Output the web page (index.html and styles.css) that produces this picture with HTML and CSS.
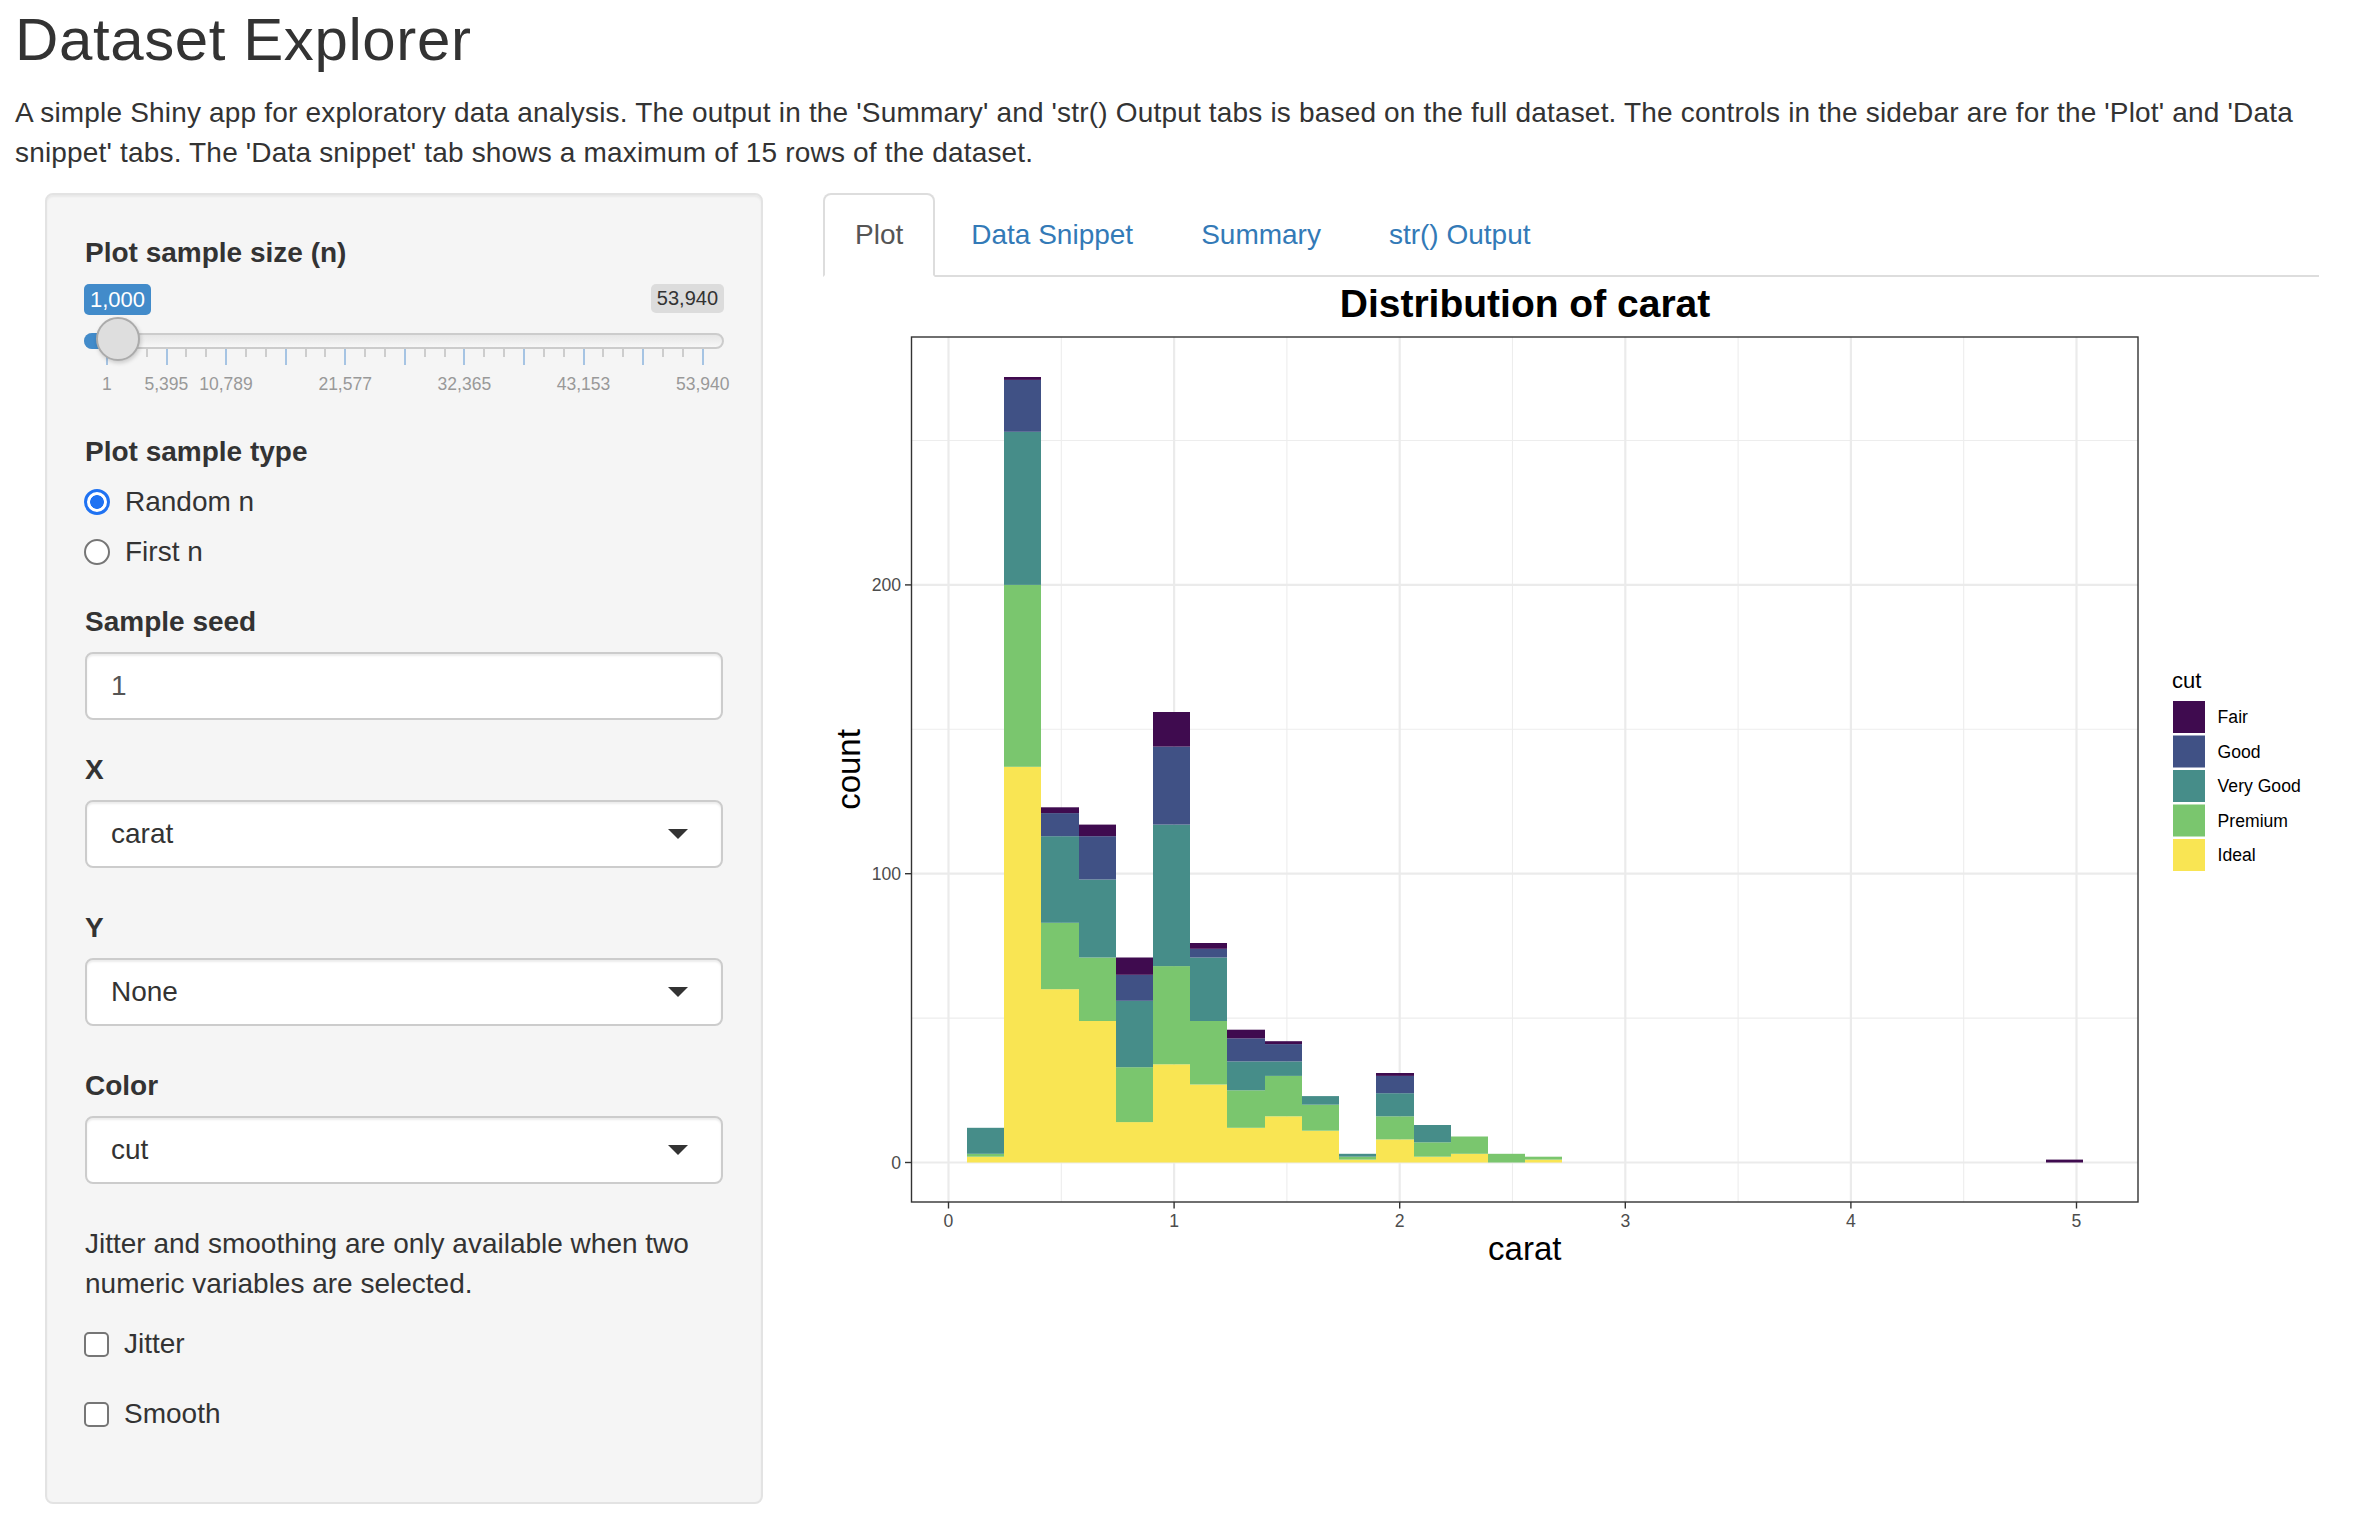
FILE: index.html
```html
<!DOCTYPE html>
<html lang="en">
<head>
<meta charset="utf-8">
<title>Dataset Explorer</title>
<link rel="stylesheet" href="styles.css">
</head>
<body>
<div class="page">
  <h2 class="title">Dataset Explorer</h2>
  <p class="intro">A simple Shiny app for exploratory data analysis. The output in the 'Summary' and 'str() Output tabs is based on the full dataset. The controls in the sidebar are for the 'Plot' and 'Data snippet' tabs. The 'Data snippet' tab shows a maximum of 15 rows of the dataset.</p>
  <div class="row">
    <div class="col-side">
      <form class="well">
        <div class="form-group">
          <label class="control-label">Plot sample size (n)</label>
          <div class="irs">
            <div class="irs-badges">
              <span class="irs-from">1,000</span>
              <span class="irs-max">53,940</span>
            </div>
            <div class="irs-track">
              <span class="irs-bar" style="width:34px"></span>
              <span class="irs-handle" style="left:10px"></span>
            </div>
            <div class="irs-grid">
              <span class="tick"></span><span class="tick small"></span><span class="tick small"></span>
              <span class="tick"></span><span class="tick small"></span><span class="tick small"></span>
              <span class="tick"></span><span class="tick small"></span><span class="tick small"></span>
              <span class="tick"></span><span class="tick small"></span><span class="tick small"></span>
              <span class="tick"></span><span class="tick small"></span><span class="tick small"></span>
              <span class="tick"></span><span class="tick small"></span><span class="tick small"></span>
              <span class="tick"></span><span class="tick small"></span><span class="tick small"></span>
              <span class="tick"></span><span class="tick small"></span><span class="tick small"></span>
              <span class="tick"></span><span class="tick small"></span><span class="tick small"></span>
              <span class="tick"></span><span class="tick small"></span><span class="tick small"></span>
              <span class="tick"></span>
            </div>
            <div class="irs-labels">
              <span>1</span><span>5,395</span><span>10,789</span><span></span><span>21,577</span><span></span><span>32,365</span><span></span><span>43,153</span><span></span><span>53,940</span>
            </div>
          </div>
        </div>

        <div class="form-group">
          <label class="control-label">Plot sample type</label>
          <div class="options">
            <div class="option"><span class="radio-mark checked"></span><span>Random n</span></div>
            <div class="option"><span class="radio-mark"></span><span>First n</span></div>
          </div>
        </div>

        <div class="form-group">
          <label class="control-label">Sample seed</label>
          <input class="form-control" type="text" value="1">
        </div>

        <div class="form-group select-group">
          <label class="control-label">X</label>
          <div class="select-box"><span>carat</span><span class="caret"></span></div>
        </div>

        <div class="form-group select-group">
          <label class="control-label">Y</label>
          <div class="select-box"><span>None</span><span class="caret"></span></div>
        </div>

        <div class="form-group select-group">
          <label class="control-label">Color</label>
          <div class="select-box"><span>cut</span><span class="caret"></span></div>
        </div>

        <p class="help">Jitter and smoothing are only available when two numeric variables are selected.</p>

        <div class="form-group">
          <div class="option"><span class="check-mark"></span><span>Jitter</span></div>
        </div>
        <div class="form-group">
          <div class="option"><span class="check-mark"></span><span>Smooth</span></div>
        </div>
      </form>
    </div>

    <div class="col-main">
      <ul class="nav-tabs">
        <li class="active"><a href="#plot">Plot</a></li>
        <li><a href="#snippet">Data Snippet</a></li>
        <li><a href="#summary">Summary</a></li>
        <li><a href="#str">str() Output</a></li>
      </ul>
      <div class="tab-content">
        <svg class="plot" viewBox="0 0 1496 1000" xmlns="http://www.w3.org/2000/svg">
          <text class="p-title" x="702" y="40" text-anchor="middle">Distribution of carat</text>

          <g class="grid-minor">
            <line x1="238.3" y1="60" x2="238.3" y2="925"/>
            <line x1="463.9" y1="60" x2="463.9" y2="925"/>
            <line x1="689.5" y1="60" x2="689.5" y2="925"/>
            <line x1="915.1" y1="60" x2="915.1" y2="925"/>
            <line x1="1140.7" y1="60" x2="1140.7" y2="925"/>
            <line x1="88.5" y1="741.1" x2="1315" y2="741.1"/>
            <line x1="88.5" y1="452.3" x2="1315" y2="452.3"/>
            <line x1="88.5" y1="163.5" x2="1315" y2="163.5"/>
          </g>
          <g class="grid-major">
            <line x1="125.5" y1="60" x2="125.5" y2="925"/>
            <line x1="351.1" y1="60" x2="351.1" y2="925"/>
            <line x1="576.7" y1="60" x2="576.7" y2="925"/>
            <line x1="802.3" y1="60" x2="802.3" y2="925"/>
            <line x1="1027.9" y1="60" x2="1027.9" y2="925"/>
            <line x1="1253.5" y1="60" x2="1253.5" y2="925"/>
            <line x1="88.5" y1="885.5" x2="1315" y2="885.5"/>
            <line x1="88.5" y1="596.7" x2="1315" y2="596.7"/>
            <line x1="88.5" y1="307.9" x2="1315" y2="307.9"/>
          </g>

          <g class="bars">
            <rect x="144" y="879.7" width="37" height="5.8" fill="#f9e553"/>
            <rect x="144" y="876.8" width="37" height="2.9" fill="#7ac66e"/>
            <rect x="144" y="850.8" width="37" height="26" fill="#468d89"/>

            <rect x="181" y="489.8" width="37" height="395.7" fill="#f9e553"/>
            <rect x="181" y="307.9" width="37" height="181.9" fill="#7ac66e"/>
            <rect x="181" y="154.8" width="37" height="153.1" fill="#468d89"/>
            <rect x="181" y="102.9" width="37" height="51.9" fill="#405185"/>
            <rect x="181" y="100" width="37" height="2.9" fill="#3f0b4f"/>

            <rect x="218" y="712.2" width="38" height="173.3" fill="#f9e553"/>
            <rect x="218" y="645.8" width="38" height="66.4" fill="#7ac66e"/>
            <rect x="218" y="559.2" width="38" height="86.6" fill="#468d89"/>
            <rect x="218" y="536.1" width="38" height="23.1" fill="#405185"/>
            <rect x="218" y="530.3" width="38" height="5.8" fill="#3f0b4f"/>

            <rect x="256" y="744" width="37" height="141.5" fill="#f9e553"/>
            <rect x="256" y="680.5" width="37" height="63.5" fill="#7ac66e"/>
            <rect x="256" y="602.5" width="37" height="78" fill="#468d89"/>
            <rect x="256" y="559.2" width="37" height="43.3" fill="#405185"/>
            <rect x="256" y="547.6" width="37" height="11.6" fill="#3f0b4f"/>

            <rect x="293" y="845.1" width="37" height="40.4" fill="#f9e553"/>
            <rect x="293" y="790.2" width="37" height="54.9" fill="#7ac66e"/>
            <rect x="293" y="723.8" width="37" height="66.4" fill="#468d89"/>
            <rect x="293" y="697.8" width="37" height="26" fill="#405185"/>
            <rect x="293" y="680.5" width="37" height="17.3" fill="#3f0b4f"/>

            <rect x="330" y="787.3" width="37" height="98.2" fill="#f9e553"/>
            <rect x="330" y="689.1" width="37" height="98.2" fill="#7ac66e"/>
            <rect x="330" y="547.6" width="37" height="141.5" fill="#468d89"/>
            <rect x="330" y="469.6" width="37" height="78" fill="#405185"/>
            <rect x="330" y="435" width="37" height="34.6" fill="#3f0b4f"/>

            <rect x="367" y="807.5" width="37" height="78" fill="#f9e553"/>
            <rect x="367" y="744" width="37" height="63.5" fill="#7ac66e"/>
            <rect x="367" y="680.5" width="37" height="63.5" fill="#468d89"/>
            <rect x="367" y="671.8" width="37" height="8.7" fill="#405185"/>
            <rect x="367" y="666" width="37" height="5.8" fill="#3f0b4f"/>

            <rect x="404" y="850.8" width="38" height="34.7" fill="#f9e553"/>
            <rect x="404" y="813.3" width="38" height="37.5" fill="#7ac66e"/>
            <rect x="404" y="784.4" width="38" height="28.9" fill="#468d89"/>
            <rect x="404" y="761.3" width="38" height="23.1" fill="#405185"/>
            <rect x="404" y="752.7" width="38" height="8.6" fill="#3f0b4f"/>

            <rect x="442" y="839.3" width="37" height="46.2" fill="#f9e553"/>
            <rect x="442" y="798.9" width="37" height="40.4" fill="#7ac66e"/>
            <rect x="442" y="784.4" width="37" height="14.5" fill="#468d89"/>
            <rect x="442" y="767.1" width="37" height="17.3" fill="#405185"/>
            <rect x="442" y="764.2" width="37" height="2.9" fill="#3f0b4f"/>

            <rect x="479" y="853.7" width="37" height="31.8" fill="#f9e553"/>
            <rect x="479" y="827.7" width="37" height="26" fill="#7ac66e"/>
            <rect x="479" y="819.1" width="37" height="8.6" fill="#468d89"/>

            <rect x="516" y="882.6" width="37" height="2.9" fill="#f9e553"/>
            <rect x="516" y="879.7" width="37" height="2.9" fill="#7ac66e"/>
            <rect x="516" y="876.8" width="37" height="2.9" fill="#468d89"/>

            <rect x="553" y="862.4" width="38" height="23.1" fill="#f9e553"/>
            <rect x="553" y="839.3" width="38" height="23.1" fill="#7ac66e"/>
            <rect x="553" y="816.2" width="38" height="23.1" fill="#468d89"/>
            <rect x="553" y="798.9" width="38" height="17.3" fill="#405185"/>
            <rect x="553" y="796" width="38" height="2.9" fill="#3f0b4f"/>

            <rect x="591" y="879.7" width="37" height="5.8" fill="#f9e553"/>
            <rect x="591" y="865.3" width="37" height="14.4" fill="#7ac66e"/>
            <rect x="591" y="848" width="37" height="17.3" fill="#468d89"/>

            <rect x="628" y="876.8" width="37" height="8.7" fill="#f9e553"/>
            <rect x="628" y="859.5" width="37" height="17.3" fill="#7ac66e"/>

            <rect x="665" y="876.8" width="37" height="8.7" fill="#7ac66e"/>

            <rect x="702" y="882.6" width="37" height="2.9" fill="#f9e553"/>
            <rect x="702" y="879.7" width="37" height="2.9" fill="#7ac66e"/>

            <rect x="1223" y="882.6" width="37" height="2.9" fill="#3f0b4f"/>
          </g>

          <rect class="panel-border" x="88.5" y="60" width="1226.5" height="865"/>

          <g class="axis-ticks">
            <line x1="82" y1="885.5" x2="88.5" y2="885.5"/>
            <line x1="82" y1="596.7" x2="88.5" y2="596.7"/>
            <line x1="82" y1="307.9" x2="88.5" y2="307.9"/>
            <line x1="125.5" y1="925" x2="125.5" y2="931.5"/>
            <line x1="351.1" y1="925" x2="351.1" y2="931.5"/>
            <line x1="576.7" y1="925" x2="576.7" y2="931.5"/>
            <line x1="802.3" y1="925" x2="802.3" y2="931.5"/>
            <line x1="1027.9" y1="925" x2="1027.9" y2="931.5"/>
            <line x1="1253.5" y1="925" x2="1253.5" y2="931.5"/>
          </g>

          <g class="tick-label">
            <text x="78" y="891.8" text-anchor="end">0</text>
            <text x="78" y="603" text-anchor="end">100</text>
            <text x="78" y="314.2" text-anchor="end">200</text>
            <text x="125.5" y="950.3" text-anchor="middle">0</text>
            <text x="351.1" y="950.3" text-anchor="middle">1</text>
            <text x="576.7" y="950.3" text-anchor="middle">2</text>
            <text x="802.3" y="950.3" text-anchor="middle">3</text>
            <text x="1027.9" y="950.3" text-anchor="middle">4</text>
            <text x="1253.5" y="950.3" text-anchor="middle">5</text>
          </g>

          <text class="axis-title" x="701.75" y="983.3" text-anchor="middle">carat</text>
          <text class="axis-title" text-anchor="middle" transform="translate(37 492.5) rotate(-90)">count</text>

          <g class="legend">
            <text class="legend-title" x="1349" y="410.5">cut</text>
            <rect x="1350" y="424" width="32" height="32" fill="#3f0b4f"/>
            <rect x="1350" y="458.5" width="32" height="32" fill="#405185"/>
            <rect x="1350" y="493" width="32" height="32" fill="#468d89"/>
            <rect x="1350" y="527.5" width="32" height="32" fill="#7ac66e"/>
            <rect x="1350" y="562" width="32" height="32" fill="#f9e553"/>
            <text class="legend-label" x="1394.6" y="446.3">Fair</text>
            <text class="legend-label" x="1394.6" y="480.8">Good</text>
            <text class="legend-label" x="1394.6" y="515.3">Very Good</text>
            <text class="legend-label" x="1394.6" y="549.8">Premium</text>
            <text class="legend-label" x="1394.6" y="584.3">Ideal</text>
          </g>
        </svg>
      </div>
    </div>
  </div>
</div>
</body>
</html>
```

FILE: styles.css
```css
* { box-sizing: border-box; }

html, body {
  margin: 0;
  padding: 0;
  background: #ffffff;
}

body {
  font-family: "Liberation Sans", Arial, Helvetica, sans-serif;
  font-size: 28px;
  line-height: 40px;
  color: #333333;
}

.page {
  padding: 0 9px 0 15px;
}

.title {
  font-size: 60px;
  line-height: 66px;
  font-weight: normal;
  letter-spacing: 0.6px;
  margin: 7px 0 20px;
  color: #333333;
}

.intro {
  margin: 0 0 20px;
  letter-spacing: 0.18px;
}

.row {
  display: flex;
  align-items: flex-start;
}

.col-side {
  flex: 0 0 778px;
  width: 778px;
  min-width: 0;
  padding: 0 30px;
}

.col-main {
  flex: 1 1 auto;
  min-width: 0;
  padding: 0 30px;
}

/* ---------- sidebar well ---------- */
.well {
  margin: 0;
  background: #f5f5f5;
  border: 2px solid #e3e3e3;
  border-radius: 8px;
  padding: 38px;
  box-shadow: inset 0 2px 2px rgba(0, 0, 0, 0.05);
}

.form-group {
  margin-bottom: 30px;
}

.select-group {
  margin-bottom: 40px;
}

.control-label {
  display: block;
  font-weight: bold;
  margin-bottom: 10px;
}

/* ---------- range slider ---------- */
.irs {
  height: 119px;
  min-width: 0;
}

.irs-badges {
  display: flex;
  justify-content: space-between;
  align-items: flex-start;
  height: 32px;
  padding-top: 1px;
}

.irs-from {
  margin-left: -1px;
  background: #428bca;
  color: #ffffff;
  font-size: 22px;
  line-height: 31px;
  padding: 0 6px;
  border-radius: 5px;
}

.irs-max {
  background: rgba(0, 0, 0, 0.1);
  color: #333333;
  font-size: 20px;
  line-height: 29px;
  padding: 0 6px;
  border-radius: 5px;
  margin-right: -1px;
}

.irs-track {
  position: relative;
  margin: 18px -1px 0 -1px;
  height: 16px;
  border: 2px solid #cccccc;
  border-radius: 8px;
  background: linear-gradient(to bottom, #dedede -50%, #ffffff 150%);
}

.irs-bar {
  position: absolute;
  left: -2px;
  top: -2px;
  height: 16px;
  background: #428bca;
  border-radius: 8px 0 0 8px;
}

.irs-handle {
  position: absolute;
  top: -18px;
  width: 44px;
  height: 44px;
  border: 2px solid #ababab;
  border-radius: 50%;
  background: #dedede;
  box-shadow: 1px 2px 4px rgba(0, 0, 0, 0.18);
  z-index: 2;
}

.irs-grid {
  display: flex;
  justify-content: space-between;
  align-items: flex-start;
  margin-left: 21px;
  width: 598px;
  height: 16px;
}

.tick {
  width: 2px;
  height: 16px;
  background: #a6c4e3;
}

.tick.small {
  height: 8px;
  background: #cdcdcd;
}

.irs-labels {
  display: flex;
  width: 638px;
  margin-top: 9px;
  margin-left: -8px;
  white-space: nowrap;
  overflow: visible;
}

.irs-labels span {
  flex: 0 0 59.6px;
  text-align: center;
  font-size: 17.5px;
  line-height: 20px;
  color: #999999;
}

/* ---------- radio / checkbox ---------- */
.option {
  display: flex;
  align-items: center;
  height: 40px;
  margin-bottom: 10px;
}

.option:last-child {
  margin-bottom: 0;
}

.radio-mark {
  flex: 0 0 26px;
  width: 26px;
  height: 26px;
  margin-left: -1px;
  margin-right: 15px;
  border: 2px solid #767676;
  border-radius: 50%;
  background: #ffffff;
}

.radio-mark.checked {
  border: 3px solid #1f72f2;
  background: radial-gradient(circle, #1f72f2 0 6.5px, #ffffff 7.2px);
}

.check-mark {
  flex: 0 0 25px;
  width: 25px;
  height: 25px;
  margin-left: -1px;
  margin-right: 15px;
  border: 2px solid #767676;
  border-radius: 5px;
  background: #ffffff;
}

/* ---------- inputs ---------- */
.form-control {
  display: block;
  width: 100%;
  height: 68px;
  margin: 0;
  padding: 0 24px;
  font-family: inherit;
  font-size: 28px;
  color: #555555;
  background: #ffffff;
  border: 2px solid #cccccc;
  border-radius: 8px;
  box-shadow: inset 0 2px 2px rgba(0, 0, 0, 0.075);
  outline: none;
}

.select-box {
  display: flex;
  align-items: center;
  justify-content: space-between;
  height: 68px;
  padding: 0 33px 0 24px;
  background: #ffffff;
  border: 2px solid #cccccc;
  border-radius: 8px;
  box-shadow: inset 0 2px 2px rgba(0, 0, 0, 0.075);
  color: #333333;
}

.caret {
  width: 0;
  height: 0;
  border-left: 10px solid transparent;
  border-right: 10px solid transparent;
  border-top: 10px solid #333333;
}

.help {
  margin: 0 0 20px;
}

/* ---------- tabs ---------- */
.nav-tabs {
  display: flex;
  list-style: none;
  margin: 0;
  padding: 0;
  border-bottom: 2px solid #dddddd;
}

.nav-tabs li {
  margin: 0 4px -2px 0;
}

.nav-tabs a {
  display: block;
  padding: 20px 30px;
  line-height: 40px;
  border: 2px solid transparent;
  border-radius: 8px 8px 0 0;
  color: #337ab7;
  text-decoration: none;
}

.nav-tabs li.active a {
  color: #555555;
  background: #ffffff;
  border-color: #dddddd #dddddd transparent;
}

/* ---------- plot ---------- */
.plot {
  display: block;
  width: 1496px;
  height: 1000px;
  font-family: "Liberation Sans", Arial, Helvetica, sans-serif;
}

.grid-minor line {
  stroke: #ededed;
  stroke-width: 1.1;
}

.grid-major line {
  stroke: #ebebeb;
  stroke-width: 2.2;
}

.panel-border {
  fill: none;
  stroke: #333333;
  stroke-width: 1.4;
}

.axis-ticks line {
  stroke: #333333;
  stroke-width: 1.4;
}

.p-title {
  font-size: 39px;
  font-weight: bold;
  fill: #000000;
}

.tick-label text {
  font-size: 17.6px;
  fill: #4d4d4d;
}

.axis-title {
  font-size: 33px;
  fill: #000000;
}

.legend-title {
  font-size: 22px;
  fill: #000000;
}

.legend-label {
  font-size: 17.6px;
  fill: #000000;
}
```
